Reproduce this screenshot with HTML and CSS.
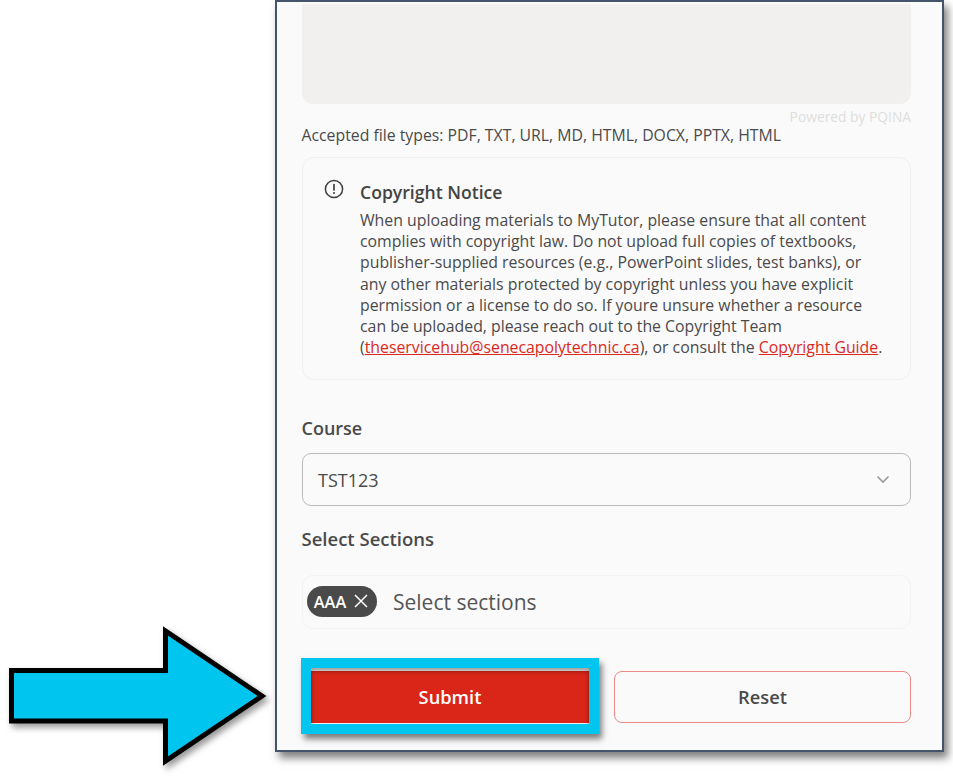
FILE: index.html
```html
<!DOCTYPE html>
<html lang="en">
<head>
<meta charset="utf-8">
<title>MyTutor upload</title>
<link rel="stylesheet" href="styles.css">
</head>
<body>
<main class="panel">
  <div class="dropzone"></div>
  <div class="powered">Powered by PQINA</div>
  <p class="accepted">Accepted file types: PDF, TXT, URL, MD, HTML, DOCX, PPTX, HTML</p>
  <section class="notice">
    <svg class="notice-icon" viewBox="0 0 20 20" width="20" height="20" aria-hidden="true">
      <circle cx="10" cy="10" r="8.6" fill="none" stroke="#3f3f3f" stroke-width="1.5"/>
      <path d="M10 5.6v5.4" fill="none" stroke="#3f3f3f" stroke-width="1.7" stroke-linecap="round"/>
      <circle cx="10" cy="14" r="1" fill="#3f3f3f"/>
    </svg>
    <div class="notice-body">
      <h2 class="notice-title">Copyright Notice</h2>
      <p class="notice-text">When uploading materials to MyTutor, please ensure that all content<br>complies with copyright law. Do not upload full copies of textbooks,<br>publisher-supplied resources (e.g., PowerPoint slides, test banks), or<br>any other materials protected by copyright unless you have explicit<br>permission or a license to do so. If youre unsure whether a resource<br>can be uploaded, please reach out to the Copyright Team<br>(<a href="#">theservicehub@senecapolytechnic.ca</a>), or consult the <a href="#">Copyright Guide</a>.</p>
    </div>
  </section>
  <label class="field-label course-label">Course</label>
  <div class="select">
    <span>TST123</span>
    <svg class="chevron" viewBox="0 0 14 9" width="14" height="9" aria-hidden="true"><path d="M1.5 1.5 7 7l5.5-5.5" fill="none" stroke="#9a9a9a" stroke-width="1.6"/></svg>
  </div>
  <label class="field-label sections-label">Select Sections</label>
  <div class="multi">
    <span class="chip">AAA
      <svg viewBox="0 0 14 14" width="14" height="14" aria-hidden="true"><path d="M1 1l12 12M13 1 1 13" fill="none" stroke="#fff" stroke-width="1.5"/></svg>
    </span>
    <span class="placeholder">Select sections</span>
  </div>
  <div class="actions">
    <button class="btn btn-submit" type="button">Submit<span class="highlight"></span></button>
    <button class="btn btn-reset" type="button">Reset</button>
  </div>
</main>
<svg class="arrow" viewBox="0 0 270 145" width="270" height="145" aria-hidden="true">
  <path d="M11.5 45.5H165.5V6L262 71 165.5 136V96H11.5Z" fill="#00c5ee" stroke="#000" stroke-width="5"/>
</svg>
</body>
</html>
```
FILE: styles.css
```css
* { box-sizing: border-box; }
html, body { margin: 0; height: 780px; overflow: hidden; background: #fff; }
body { font-family: "Open Sans", "Noto Sans", sans-serif; color: #4a4a4a; position: relative; }

.panel {
  width: 669px;
  height: 752px;
  margin-left: 275px;
  padding: 2px 31px 0 24.5px;
  background: #fafafa;
  border: 2px solid #44546a;
  box-shadow: 4px 6px 8px rgba(0, 0, 0, .5);
  display: flex;
  flex-direction: column;
}
.dropzone { height: 100px; background: #f1f0ef; border-radius: 0 0 11px 11px; flex: none; }
.powered { margin-top: 4px; height: 18px; text-align: right; font-size: 13.8px; line-height: 18px; color: #dedede; }
.accepted { margin: 0; font-size: 15.8px; line-height: 20px; height: 20px; margin-top: -1px; white-space: nowrap; }

.notice {
  margin-top: 12px;
  height: 223px;
  padding: 22px 20px 0 21.5px;
  border: 1px solid #f0f0f0;
  border-radius: 12px;
  display: flex;
  gap: 16px;
  flex: none;
}
.notice-icon { flex: none; margin-top: -1px; }
.notice-title { margin: -5px 0 0; font-size: 17.6px; line-height: 35px; font-weight: 600; color: #444; }
.notice-text { margin: 0; font-size: 15.83px; line-height: 21.2px; white-space: nowrap; }
.notice-text a { color: #da291c; text-decoration: underline; }

.field-label { display: block; font-weight: 600; line-height: 24px; color: #4a4a4a; }
.course-label { margin-top: 36px; font-size: 18px; }
.select {
  margin-top: 13px;
  height: 53px;
  flex: none;
  border: 1px solid #bcbcbc;
  border-radius: 9px;
  padding: 0 20px 0 15.5px;
  display: flex;
  align-items: center;
  justify-content: space-between;
  font-size: 18px;
}
.sections-label { margin-top: 21px; font-size: 18.5px; }
.multi {
  margin-top: 24px;
  height: 54px;
  flex: none;
  border: 1px solid #f3f3f3;
  border-radius: 11px;
  padding: 0 0 0 4.5px;
  display: flex;
  align-items: center;
  gap: 16px;
}
.chip {
  width: 70px;
  height: 31px;
  margin-bottom: 2px;
  padding-right: 2px;
  border-radius: 16px;
  background: #4a4a4a;
  color: #fff;
  font-size: 16.4px;
  font-weight: 600;
  display: flex;
  align-items: center;
  justify-content: center;
  gap: 8px;
}
.placeholder { font-size: 21px; color: #555; }

.actions { margin-top: 42px; display: grid; grid-template-columns: 1fr 1fr; gap: 15.5px; }
.btn {
  height: 52px;
  border-radius: 8px;
  font-family: inherit;
  font-size: 18.3px;
  font-weight: 600;
  padding: 0 0 1px;
}
.btn-submit { position: relative; background: #da2618; color: #fff; border: 0; }
.btn-reset { background: #fafafa; color: #4a4a4a; border: 1px solid #ea8a84; }
.highlight {
  position: absolute;
  left: -.5px;
  top: -13px;
  width: 298px;
  height: 76px;
  border: 10px solid #00c5ee;
  box-shadow: 3px 5px 6px rgba(0, 0, 0, .5), inset 0 3px 5px rgba(0, 0, 0, .4);
}
.arrow {
  position: absolute;
  left: 0;
  top: 625px;
  filter: drop-shadow(3px 4px 3px rgba(0, 0, 0, .4));
}
```
